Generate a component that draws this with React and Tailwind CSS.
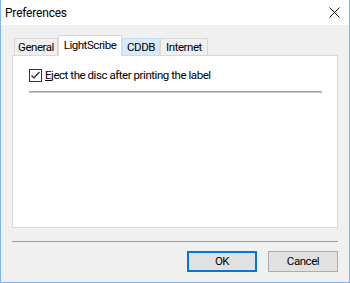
import React from 'react';

const Tab = ({ label, active, hover, width }) => {
  if (active) {
    return (
      <div className={`h-[21px] ${width} -mb-px bg-white border border-b-0 border-[#d9d9d9] flex items-start justify-center pt-[4px] z-10 relative`}>
        {label}
      </div>
    );
  }
  return (
    <div className={`h-[17px] ${width} border border-b-0 flex items-center justify-center pt-px ${hover ? 'bg-[#d8eaf9] border-[#c5dff5]' : 'bg-[#f0f0f0] border-[#d9d9d9]'}`}>
      {label}
    </div>
  );
};

const App = () => {
  return (
    <div className="w-[350px] h-[283px] flex flex-col bg-[#f0f0f0] border border-t-0 border-[#7fb5ec] text-[11.5px] tracking-[-0.45px] text-black font-['Roboto',sans-serif] leading-none">
      <div className="h-[25px] shrink-0 bg-white flex items-center justify-between pl-[4px] pr-[9px]">
        <span className="text-[12px] tracking-[-0.2px]">Preferences</span>
        <svg width="11" height="11" viewBox="0 0 11 11">
          <path d="M0.5 0.5 L10.5 10.5 M10.5 0.5 L0.5 10.5" stroke="#111" strokeWidth="1" fill="none" />
        </svg>
      </div>

      <div className="flex-1 flex flex-col px-[11px]">
        <div className="flex items-end mt-[10px] pl-[2px] h-[20px]">
          <Tab label="General" width="w-[44px]" />
          <Tab label="LightScribe" width="w-[64px]" active />
          <Tab label="CDDB" width="w-[38px]" hover />
          <Tab label="Internet" width="w-[48px]" />
        </div>

        <div className="h-[173px] bg-white border border-[#d9d9d9] pt-[13px] pl-[16px] pr-[14px]">
          <label className="flex items-center gap-[3px] h-[13px]">
            <span className="w-[13px] h-[13px] border border-[#333] bg-white flex items-center justify-center">
              <svg width="11" height="11" viewBox="0 0 11 11">
                <path d="M1.5 5.5 L4 8 L9.5 2" stroke="#222" strokeWidth="1.2" fill="none" />
              </svg>
            </span>
            <span><span className="underline">E</span>ject the disc after printing the label</span>
          </label>
          <div className="mt-[9px] h-[2px] bg-[#c4c4c4] border-t border-[#a8a8a8] w-[293px]" />
        </div>

        <div className="mt-[13px] h-px bg-[#a0a0a0]" />

        <div className="flex justify-end gap-[11px] mt-[9px]">
          <button className="w-[70px] h-[21px] bg-[#e1e1e1] border-2 border-[#0078d7] flex items-center justify-center">OK</button>
          <button className="w-[70px] h-[21px] bg-[#e1e1e1] border border-[#adadad] flex items-center justify-center">Cancel</button>
        </div>
      </div>
    </div>
  );
};

export default App;
